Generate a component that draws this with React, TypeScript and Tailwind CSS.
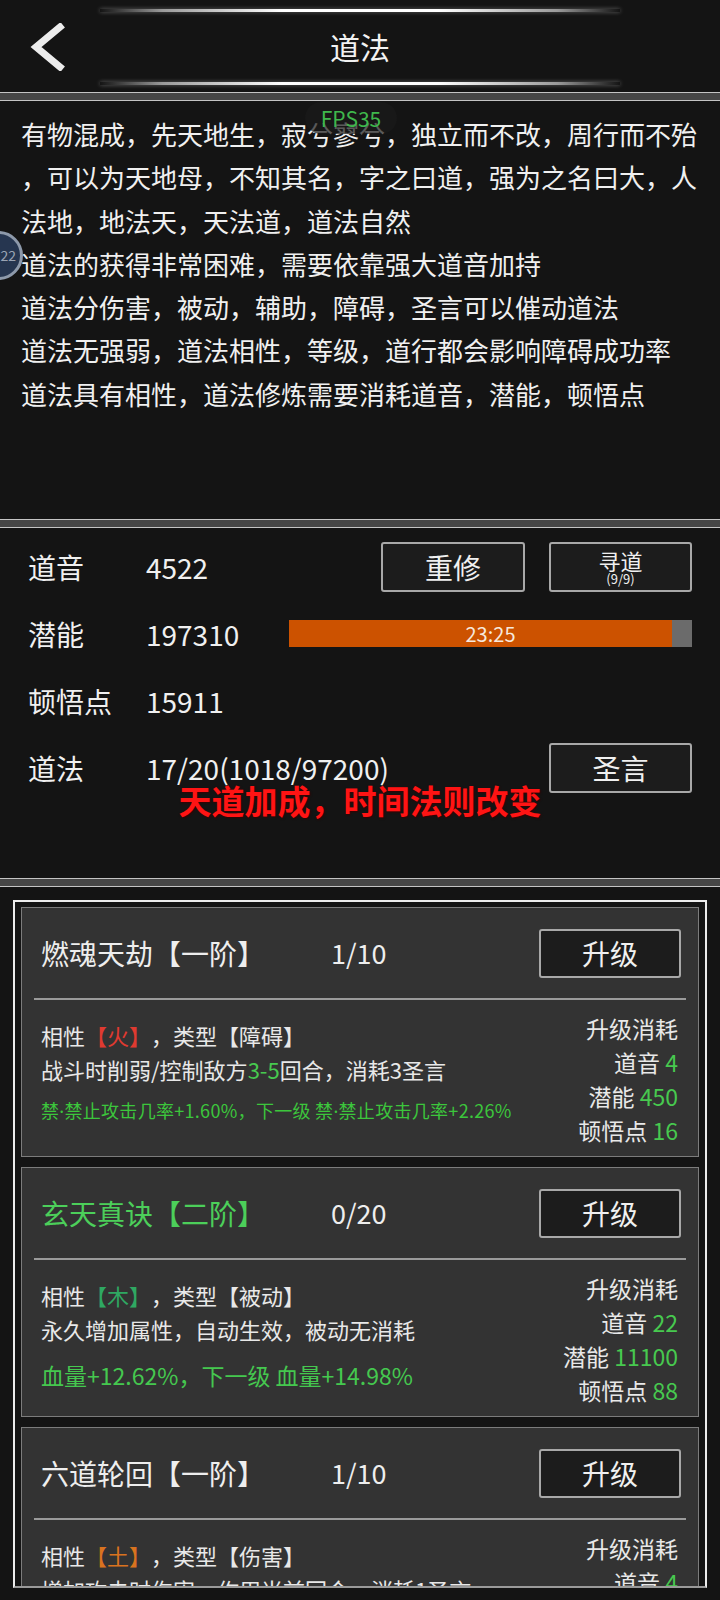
import type { ReactNode } from 'react'

const Band = () => <div className="h-[9px] border-y border-[#c4c4c4] bg-[#464646]" />

const GlowLine = () => (
  <div className="h-[3px] w-[520px] bg-[linear-gradient(to_right,transparent,#9a9a9a_12%,#ffffff_35%,#ffffff_65%,#9a9a9a_88%,transparent)] [box-shadow:0_0_4px_rgba(255,255,255,0.35)]" />
)

const G = ({ children }: { children: ReactNode }) => <span className="text-[#47c94f]">{children}</span>
const Dot = () => <span className="font-['Noto_Sans',sans-serif]">·</span>

type CardProps = {
  title: string
  titleCls: string
  level: string
  aff: string
  affCls: string
  type: string
  desc: ReactNode
  effect: ReactNode
  effectCls: string
  cost: [string, string][]
}

function SkillCard({ title, titleCls, level, aff, affCls, type, desc, effect, effectCls, cost }: CardProps) {
  return (
    <div className="h-[250px] shrink-0 bg-[#333333] border border-[#7c7c7c] px-[12px]">
      <div className="flex items-center h-[90px] pl-[7px] pr-[5px]">
        <div className={`w-[290px] text-[28px] leading-[34px] ${titleCls}`}>{title}</div>
        <div className="text-[27px] leading-[34px] text-[#eeeeee]">{level}</div>
        <button className="ml-auto w-[142px] h-[49px] rounded-[3px] border-2 border-[#a8a8a8] bg-[#1c1c1c] text-[28px] text-[#f0f0f0]">升级</button>
      </div>
      <div className="h-[2px] bg-[#9a9a9a]" />
      <div className="flex">
        <div className="flex-1 pl-[7px] pt-[18px] text-[#e8e8e8]">
          <div className="text-[22px] leading-[34px] whitespace-nowrap">
            相性<span className={affCls}>【{aff}】</span>，类型【{type}】
          </div>
          <div className="text-[22px] leading-[34px] whitespace-nowrap">{desc}</div>
          <div className={`leading-[34px] whitespace-nowrap ${effectCls}`}>{effect}</div>
        </div>
        <div className="pr-[8px] pt-[11px] text-right text-[23px] leading-[34px] text-[#e8e8e8] whitespace-nowrap">
          <div>升级消耗</div>
          {cost.map(([k, v]) => (
            <div key={k}>
              {k} <G>{v}</G>
            </div>
          ))}
        </div>
      </div>
    </div>
  )
}

const lines = [
  '有物混成，先天地生，寂兮寥兮，独立而不改，周行而不殆',
  '，可以为天地母，不知其名，字之曰道，强为之名曰大，人',
  '法地，地法天，天法道，道法自然',
  '道法的获得非常困难，需要依靠强大道音加持',
  '道法分伤害，被动，辅助，障碍，圣言可以催动道法',
  '道法无强弱，道法相性，等级，道行都会影响障碍成功率',
  '道法具有相性，道法修炼需要消耗道音，潜能，顿悟点',
]

export default function App() {
  return (
    <div className="w-[720px] h-[1600px] overflow-hidden bg-[#141414] text-[#eeeeee] font-['Noto_Sans_CJK_SC','Noto_Sans',sans-serif] [text-spacing-trim:space-all]">
      {/* header */}
      <div className="h-[92px] flex flex-col items-center pt-[9px]">
        <GlowLine />
        <div className="w-full h-[70px] grid grid-cols-[1fr_auto_1fr] items-center">
          <div className="pl-[29px]">
            <svg width="38" height="48" viewBox="0 0 38 48">
              <polyline points="31,4 7,24 31,44" fill="none" stroke="#ececec" strokeWidth="7" strokeLinecap="square" />
            </svg>
          </div>
          <div className="text-[30px] leading-[40px] text-[#f2f2f2] -mt-[2px]">道法</div>
          <div />
        </div>
        <GlowLine />
      </div>
      <Band />

      {/* intro text */}
      <div className="relative h-[418px] pt-[11px] pl-[21px] text-[26px] leading-[43.3px] text-[#f0f0f0]">
        {lines.map(l => (
          <div key={l} className="whitespace-nowrap">{l}</div>
        ))}
        <div className="absolute left-[305px] top-[1px] w-[92px] h-[32px] rounded-full bg-[#1a1a1a]/70 flex items-center justify-center text-[21px] leading-[24px] text-[#3fb84c]">FPS35</div>
        <div className="absolute left-[-26px] top-[130px] w-[49px] h-[49px] rounded-full bg-[#263650] border-[3px] border-[#8d99aa] flex items-center justify-end pr-[4px] text-[14px] text-[#9aa4b4]">22</div>
      </div>
      <Band />

      {/* stats */}
      <div className="h-[350px] pt-[5px] px-[28px] text-[28px] text-[#f0f0f0]">
        <div className="flex items-center h-[67px]">
          <div className="w-[118px]">道音</div>
          <div>4522</div>
          <div className="ml-auto flex gap-[24px]">
            <button className="w-[144px] h-[50px] rounded-[3px] border-2 border-[#a8a8a8] bg-[#1c1c1c] text-[28px] text-[#f0f0f0]">重修</button>
            <button className="w-[143px] h-[50px] rounded-[3px] border-2 border-[#a8a8a8] bg-[#1c1c1c] flex flex-col items-center justify-center text-[#f0f0f0]">
              <span className="text-[22px] leading-[24px]">寻道</span>
              <span className="text-[13px] leading-[14px]">(9/9)</span>
            </button>
          </div>
        </div>
        <div className="flex items-center h-[67px]">
          <div className="w-[118px]">潜能</div>
          <div className="w-[143px]">197310</div>
          <div className="relative flex-1 h-[27px] bg-[#6b6b6b]">
            <div className="h-full bg-[#cc5200]" style={{ width: '95%' }} />
            <div className="absolute inset-0 flex items-center justify-center text-[20px] text-[#f6e8dc]">23:25</div>
          </div>
        </div>
        <div className="flex items-center h-[67px]">
          <div className="w-[118px]">顿悟点</div>
          <div>15911</div>
        </div>
        <div className="flex items-center h-[67px]">
          <div className="w-[118px]">道法</div>
          <div>17/20(1018/97200)</div>
          <button className="ml-auto w-[143px] h-[50px] rounded-[3px] border-2 border-[#a8a8a8] bg-[#1c1c1c] text-[28px] text-[#f0f0f0]">圣言</button>
        </div>
        <div className="-mt-[19px] h-[36px] flex justify-center text-[33px] leading-[36px] font-bold text-[#ff1414] [text-shadow:1px_1px_2px_#3a0000]">
          天道加成，时间法则改变
        </div>
      </div>
      <Band />

      {/* skill list */}
      <div className="mx-[13px] mt-[13px] h-[688px] overflow-hidden border-2 border-[#ececec] border-b-[#9a9a9a] px-[6px] pt-[5px] flex flex-col gap-[10px]">
        <SkillCard
          title="燃魂天劫【一阶】"
          titleCls="text-[#eeeeee]"
          level="1/10"
          aff="火"
          affCls="text-[#e03a30]"
          type="障碍"
          desc={<>战斗时削弱/控制敌方<G>3-5</G>回合，消耗3圣言</>}
          effect={<>禁<Dot />禁止攻击几率+1.60%，下一级 禁<Dot />禁止攻击几率+2.26%</>}
          effectCls="text-[18px] tracking-[0.3px] mt-[7px] text-[#3cc63c]"
          cost={[['道音', '4'], ['潜能', '450'], ['顿悟点', '16']]}
        />
        <SkillCard
          title="玄天真诀【二阶】"
          titleCls="text-[#4ccf5a]"
          level="0/20"
          aff="木"
          affCls="text-[#2fa862]"
          type="被动"
          desc="永久增加属性，自动生效，被动无消耗"
          effect="血量+12.62%，下一级 血量+14.98%"
          effectCls="text-[23px] mt-[12px] text-[#45c84f]"
          cost={[['道音', '22'], ['潜能', '11100'], ['顿悟点', '88']]}
        />
        <SkillCard
          title="六道轮回【一阶】"
          titleCls="text-[#eeeeee]"
          level="1/10"
          aff="土"
          affCls="text-[#d9731f]"
          type="伤害"
          desc="增加攻击时伤害，作用当前回合，消耗1圣言"
          effect=""
          effectCls="text-[16px]"
          cost={[['道音', '4'], ['潜能', '450'], ['顿悟点', '16']]}
        />
      </div>
    </div>
  )
}
